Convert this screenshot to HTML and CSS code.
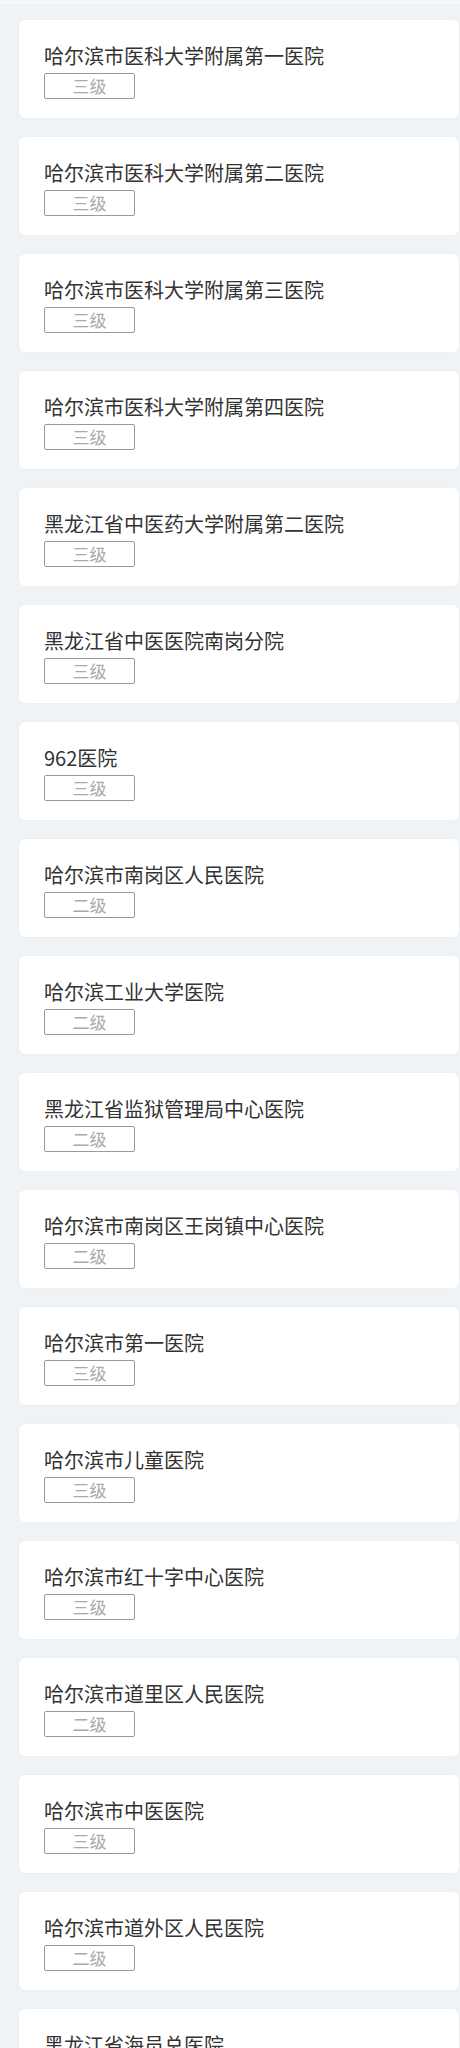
FILE: index.html
```html
<!DOCTYPE html>
<html lang="zh-CN">
<head>
<meta charset="utf-8">
<title>医院列表</title>
<link rel="stylesheet" href="styles.css">
</head>
<body>
<div class="top-band"></div>
<ul class="list">
  <li class="card"><div class="name">哈尔滨市医科大学附属第一医院</div><span class="level">三级</span></li>
  <li class="card"><div class="name">哈尔滨市医科大学附属第二医院</div><span class="level">三级</span></li>
  <li class="card"><div class="name">哈尔滨市医科大学附属第三医院</div><span class="level">三级</span></li>
  <li class="card"><div class="name">哈尔滨市医科大学附属第四医院</div><span class="level">三级</span></li>
  <li class="card"><div class="name">黑龙江省中医药大学附属第二医院</div><span class="level">三级</span></li>
  <li class="card"><div class="name">黑龙江省中医医院南岗分院</div><span class="level">三级</span></li>
  <li class="card"><div class="name">962医院</div><span class="level">三级</span></li>
  <li class="card"><div class="name">哈尔滨市南岗区人民医院</div><span class="level">二级</span></li>
  <li class="card"><div class="name">哈尔滨工业大学医院</div><span class="level">二级</span></li>
  <li class="card"><div class="name">黑龙江省监狱管理局中心医院</div><span class="level">二级</span></li>
  <li class="card"><div class="name">哈尔滨市南岗区王岗镇中心医院</div><span class="level">二级</span></li>
  <li class="card"><div class="name">哈尔滨市第一医院</div><span class="level">三级</span></li>
  <li class="card"><div class="name">哈尔滨市儿童医院</div><span class="level">三级</span></li>
  <li class="card"><div class="name">哈尔滨市红十字中心医院</div><span class="level">三级</span></li>
  <li class="card"><div class="name">哈尔滨市道里区人民医院</div><span class="level">二级</span></li>
  <li class="card"><div class="name">哈尔滨市中医医院</div><span class="level">三级</span></li>
  <li class="card"><div class="name">哈尔滨市道外区人民医院</div><span class="level">二级</span></li>
  <li class="card"><div class="name">黑龙江省海员总医院</div><span class="level">三级</span></li>
</ul>
</body>
</html>
```

FILE: styles.css
```css
html, body {
  margin: 0;
  padding: 0;
  background: #eff3f6;
}
body {
  font-family: "Noto Sans CJK SC", "Noto Sans", sans-serif;
  color: #333;
}
.top-band {
  height: 5px;
  background: #f4f6f8;
  border-bottom: 1px solid #ebeff2;
}
.list {
  list-style: none;
  margin: 0;
  padding: 14px 1px 0 19px;
  display: flex;
  flex-direction: column;
  gap: 19px;
}
.card {
  background: #fff;
  border-radius: 6px;
  box-shadow: 0 0 2px rgba(0, 0, 0, 0.06);
  height: 98px;
  box-sizing: border-box;
  padding: 22px 24px 0 25px;
  display: flex;
  flex-direction: column;
  align-items: flex-start;
}
.name {
  font-size: 20px;
  line-height: 28px;
  color: #333;
  white-space: nowrap;
}
.level {
  margin-top: 3px;
  width: 91px;
  height: 26px;
  box-sizing: border-box;
  border: 1px solid #999;
  border-radius: 2px;
  font-size: 17px;
  line-height: 24px;
  color: #aaa;
  text-align: center;
}
```
